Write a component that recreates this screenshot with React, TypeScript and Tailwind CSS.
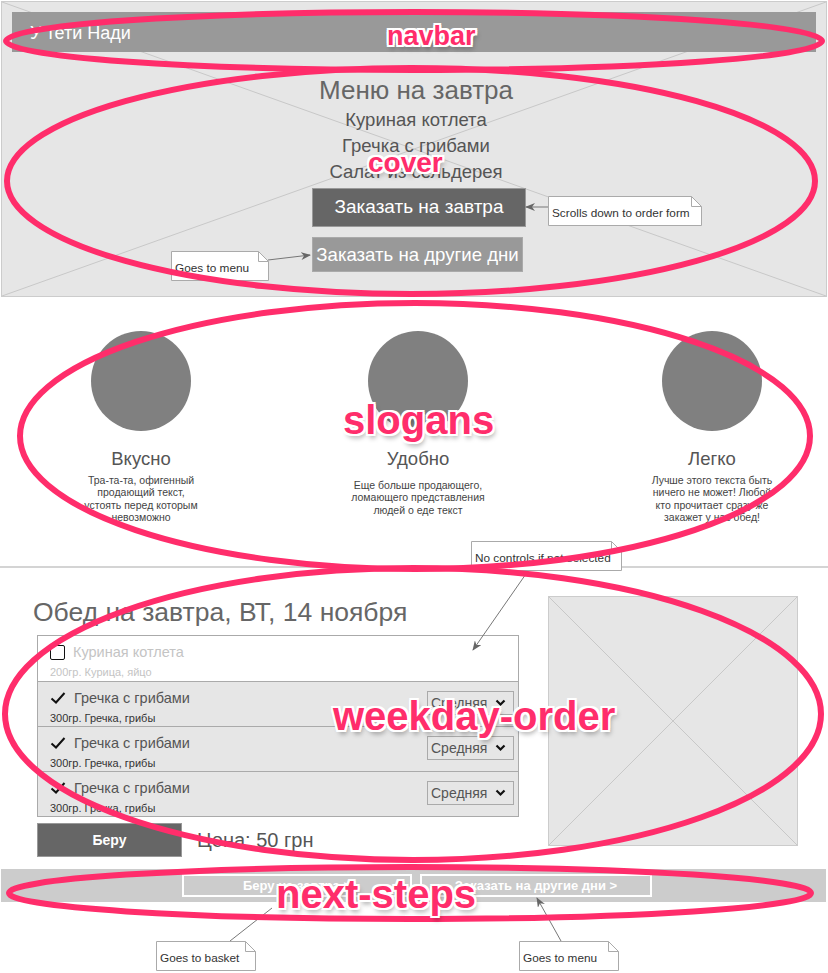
const CrossLines = ({ w, h }: { w: number; h: number }) => (
  <svg className="absolute inset-0" width="100%" height="100%" viewBox={`0 0 ${w} ${h}`} preserveAspectRatio="none">
    <line x1="0" y1="0" x2={w} y2={h} stroke="#c8c8c8" strokeWidth="1" />
    <line x1="0" y1={h} x2={w} y2="0" stroke="#c8c8c8" strokeWidth="1" />
  </svg>
);

const Note = ({ text, w, pos }: { text: string; w: number; pos: string }) => (
  <div className={`absolute h-[30px] ${pos}`} style={{ width: w }}>
    <svg className="absolute inset-0" width={w} height="30">
      <path d={`M0.5 0.5 H${w - 10.5} L${w - 0.5} 10.5 V29.5 H0.5 Z`} fill="#fff" stroke="#aaa" />
      <path d={`M${w - 10.5} 0.5 V10.5 H${w - 0.5}`} fill="none" stroke="#aaa" />
    </svg>
    <div className="relative pl-[4px] pt-[10px] text-[11.8px] leading-[14px] text-[#333] whitespace-nowrap">{text}</div>
  </div>
);

const Check = () => (
  <svg width="16" height="14" viewBox="0 0 16 14" className="shrink-0">
    <path d="M1.5 7.5 L6 11.5 L14.5 2" fill="none" stroke="#111" strokeWidth="2" />
  </svg>
);

const Chevron = () => (
  <svg width="11" height="8" viewBox="0 0 11 8">
    <path d="M1.5 1.5 L5.5 5.5 L9.5 1.5" fill="none" stroke="#111" strokeWidth="2.2" />
  </svg>
);

const Size = () => (
  <div className="mt-[9px] mr-[4px] flex h-[24px] w-[87px] items-center justify-between border border-[#aaa] pl-[3px] pr-[7px] text-[14px] text-[#555]">
    <span>Средняя</span>
    <Chevron />
  </div>
);

const Dish = ({ checked }: { checked: boolean }) => (
  <div className={`flex h-[45px] border-[#aaa] ${checked ? "border-t bg-[#e6e6e6]" : "bg-white"}`}>
    <div className="flex-1 pl-[12px] pt-[7px]">
      <div className="flex h-[18px] items-center gap-[8px] text-[14.5px] leading-[18px]">
        {checked ? (
          <Check />
        ) : (
          <div className="h-[15px] w-[15px] rounded-[2px] border-[1.5px] border-[#111] bg-white" />
        )}
        <span className={checked ? "text-[#555]" : "text-[#c4c4c4]"}>{checked ? "Гречка с грибами" : "Куриная котлета"}</span>
      </div>
      <div className={`mt-[5px] text-[11px] leading-[12px] ${checked ? "text-[#333]" : "text-[#c4c4c4]"}`}>
        {checked ? "300гр. Гречка, грибы" : "200гр. Курица, яйцо"}
      </div>
    </div>
    {checked && <Size />}
  </div>
);

const Slogan = ({ title, lines, cls, gap }: { title: string; lines: string[]; cls: string; gap: string }) => (
  <div className={`flex w-[200px] flex-col items-center ${cls}`}>
    <div className="h-[100px] w-[100px] rounded-full bg-[#808080]" />
    <div className="mt-[18px] text-[18.5px] leading-[20px] text-[#555]">{title}</div>
    <div className={`text-center text-[10.5px] leading-[12.3px] text-[#444] ${gap}`}>
      {lines.map((l) => (
        <div key={l}>{l}</div>
      ))}
    </div>
  </div>
);

const labelShadow =
  "[text-shadow:2px_0_0_#fff,-2px_0_0_#fff,0_2px_0_#fff,0_-2px_0_#fff,2px_2px_0_#fff,-2px_-2px_0_#fff,2px_-2px_0_#fff,-2px_2px_0_#fff,2px_4px_5px_rgba(0,0,0,0.35)]";

export default function App() {
  return (
    <div className="relative h-[973px] w-[828px] overflow-hidden bg-white font-['Liberation_Sans',Arial,sans-serif]">
      {/* cover */}
      <section className="relative ml-[1px] mt-[1px] h-[296px] w-[826px] border border-[#ccc] bg-[#e6e6e6]">
        <CrossLines w={824} h={294} />
        <div className="relative">
          <nav className="mx-[10px] mt-[10px] flex h-[40px] items-center bg-[#999] pb-[1px] pl-[18px] text-[18px] leading-[20px] text-white">
            <span className="mt-[3px]">У тети Нади</span>
          </nav>
          <div className="flex flex-col items-center pl-[4px]">
            <h1 className="mt-[24px] text-[26px] leading-[28px] text-[#666]">Меню на завтра</h1>
            <div className="mt-[3px] flex flex-col items-center text-[18.5px] leading-[26px] text-[#555]">
              <div>Куриная котлета</div>
              <div>Гречка с грибами</div>
              <div>Салат из сельдерея</div>
            </div>
            <div className="ml-[6px] mt-[3px] flex w-[214px] flex-col">
              <button className="h-[39px] w-[214px] border border-[#999] bg-[#666] text-[19px] text-white">Заказать на завтра</button>
              <button className="mt-[10px] h-[35px] w-[211px] border border-[#aaa] bg-[#999] text-[18.6px] text-white">
                Заказать на другие дни
              </button>
            </div>
          </div>
        </div>
      </section>

      {/* slogans */}
      <section className="flex h-[269px] pt-[34px]">
        <Slogan cls="ml-[41px]" gap="mt-[5px]" title="Вкусно" lines={["Тра-та-та, офигенный", "продающий текст,", "устоять перед которым", "невозможно"]} />
        <Slogan cls="ml-[77px]" gap="mt-[10px]" title="Удобно" lines={["Еще больше продающего,", "ломающего представления", "людей о еде текст"]} />
        <Slogan cls="ml-[94px]" gap="mt-[5px]" title="Легко" lines={["Лучше этого текста быть", "ничего не может! Любой", "кто прочитает сразу же", "закажет у нас обед!"]} />
      </section>
      <div className="h-[2px] w-full bg-[#d4d4d4]" />

      {/* weekday order */}
      <section className="flex">
        <div className="ml-[33px] w-[486px] pt-[30px]">
          <h2 className="text-[26.5px] leading-[28px] text-[#666]">Обед на завтра, ВТ, 14 ноября</h2>
          <div className="ml-[4px] mt-[9px] border border-[#aaa]">
            <Dish checked={false} />
            <Dish checked />
            <Dish checked />
            <Dish checked />
          </div>
          <div className="ml-[4px] mt-[6px] flex items-center">
            <button className="h-[34px] w-[145px] border border-[#999] bg-[#666] text-[14px] font-bold text-white">Беру</button>
            <span className="ml-[15px] text-[20px] text-[#555]">Цена: 50 грн</span>
          </div>
        </div>
        <div className="relative ml-[29px] mt-[28px] h-[250px] w-[250px] border border-[#ccc] bg-[#e6e6e6]">
          <CrossLines w={248} h={248} />
        </div>
      </section>

      {/* next steps */}
      <section className="ml-[1px] mt-[12px] flex h-[33px] w-[825px] items-center bg-[#ccc] pl-[181px]">
        <button className="h-[23px] w-[230px] border-2 border-white text-[13px] font-bold text-white">Беру на завтра &gt;</button>
        <button className="ml-[8px] h-[23px] w-[232px] border-2 border-white text-[13px] font-bold text-white">
          Заказать на другие дни &gt;
        </button>
      </section>

      {/* annotations */}
      <Note text="Scrolls down to order form" w={154} pos="left-[548px] top-[196px]" />
      <Note text="Goes to menu" w={98} pos="left-[171px] top-[251px]" />
      <Note text="No controls if not selected" w={151} pos="left-[471px] top-[541px]" />
      <Note text="Goes to basket" w={100} pos="left-[156px] top-[941px]" />
      <Note text="Goes to menu" w={100} pos="left-[519px] top-[941px]" />

      <svg className="pointer-events-none absolute inset-0" width="828" height="973">
        <defs>
          <marker id="ah" markerWidth="10" markerHeight="8" refX="9" refY="4" orient="auto" markerUnits="userSpaceOnUse">
            <path d="M0 0 L10 4 L0 8 L3 4 Z" fill="#666" />
          </marker>
        </defs>
        <g stroke="#777" strokeWidth="1" fill="none">
          <line x1="548" y1="207" x2="526" y2="207" markerEnd="url(#ah)" />
          <line x1="268" y1="260" x2="310" y2="255" markerEnd="url(#ah)" />
          <line x1="528" y1="571" x2="473" y2="650" markerEnd="url(#ah)" />
          <line x1="230" y1="941" x2="272" y2="908" />
          <line x1="561" y1="941" x2="537" y2="898" markerEnd="url(#ah)" />
        </g>
        <g stroke="#ff2d6b" strokeWidth="6" fill="none">
          <ellipse cx="414" cy="41" rx="408" ry="29" />
          <ellipse cx="411" cy="181" rx="404" ry="113" />
          <ellipse cx="415" cy="436" rx="395" ry="133" />
          <ellipse cx="413" cy="714" rx="408" ry="146" />
          <ellipse cx="410" cy="893" rx="401" ry="26" />
        </g>
      </svg>

      <div className={`absolute left-[387px] top-[23px] text-[27px] font-bold leading-none text-[#ff2d6b] ${labelShadow}`}>navbar</div>
      <div className={`absolute left-[368px] top-[149px] text-[28px] font-bold leading-none text-[#ff2d6b] ${labelShadow}`}>cover</div>
      <div className={`absolute left-[343px] top-[400px] text-[40px] font-bold leading-none text-[#ff2d6b] ${labelShadow}`}>slogans</div>
      <div className={`absolute left-[333px] top-[696px] text-[40px] font-bold leading-none text-[#ff2d6b] ${labelShadow}`}>weekday-order</div>
      <div className={`absolute left-[276px] top-[874px] text-[40px] font-bold leading-none text-[#ff2d6b] ${labelShadow}`}>next-steps</div>
    </div>
  );
}
